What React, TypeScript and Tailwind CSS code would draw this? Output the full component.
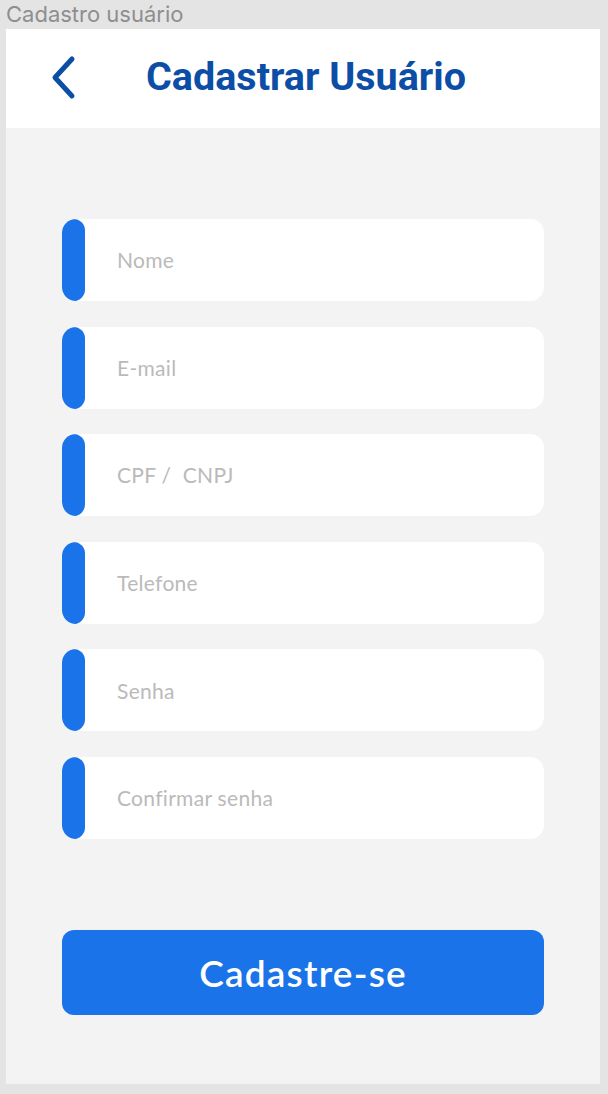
import React from "react";

const fields = ["Nome", "E-mail", "CPF /  CNPJ", "Telefone", "Senha", "Confirmar senha"];

export default function App() {
  return (
    <div className="w-[608px] h-[1094px] bg-[#e4e4e4] overflow-hidden">
      <div className="h-[29px] pl-[6px] text-[22px] leading-[28px] text-[#8e8e8e] font-['Inter',sans-serif] whitespace-pre">
        Cadastro usuário
      </div>
      <div className="ml-[6px] w-[594px] h-[1055px] bg-[#f3f3f3] flex flex-col">
        <div className="h-[99px] bg-white flex items-center relative shrink-0">
          <svg className="absolute left-[40px] top-[24px]" width="36" height="50" viewBox="0 0 36 50">
            <polyline points="26,6 9,24.5 26,43" fill="none" stroke="#0c4ea6" strokeWidth="5" strokeLinecap="round" strokeLinejoin="round" />
          </svg>
          <div className="pl-[140px] pb-[4px] text-[39.5px] font-bold text-[#0c4ea6] font-['Roboto',sans-serif] leading-none">
            Cadastrar Usuário
          </div>
        </div>
        <div className="flex flex-col pt-[91px] px-[56px] gap-[25.6px]">
          {fields.map((f) => (
            <div key={f} className="h-[82px] w-[482px] bg-white rounded-[14px] flex items-center relative overflow-hidden">
              <div className="absolute left-0 top-0 h-full w-[23px] bg-[#1a73e8] rounded-full" />
              <span className="pl-[55px] text-[21px] tracking-[0.3px] text-[#bababa] font-['Lato',sans-serif] whitespace-pre">{f}</span>
            </div>
          ))}
        </div>
        <div className="px-[56px] pt-[91px]">
          <button className="w-[482px] h-[85px] bg-[#1a73e8] rounded-[12px] text-white text-[37px] tracking-[1.2px] font-semibold font-['Lato',sans-serif] flex items-center justify-center">
            Cadastre-se
          </button>
        </div>
      </div>
    </div>
  );
}
